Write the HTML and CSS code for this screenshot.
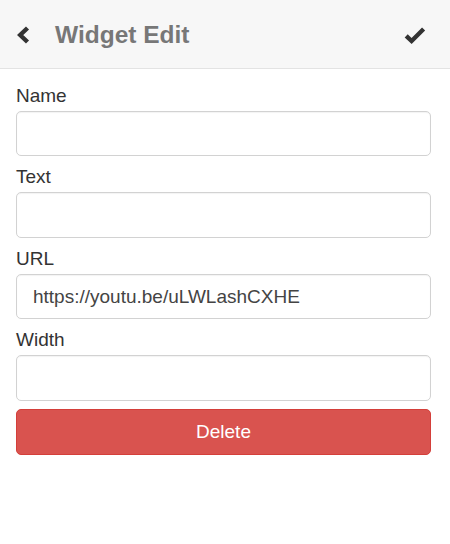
FILE: index.html
```html
<!DOCTYPE html>
<html>
<head>
<meta charset="utf-8">
<link rel="stylesheet" href="styles.css">
</head>
<body>
<header class="topbar">
  <svg class="icon-back" width="14" height="18" viewBox="0 0 14 18"><polyline points="11.5,2 4.2,9 11.5,16" fill="none" stroke="#333" stroke-width="4.4" stroke-linejoin="miter"/></svg>
  <h1 class="title">Widget Edit</h1>
  <svg class="icon-ok" width="22" height="19" viewBox="0 0 22 19"><polyline points="2.2,9.8 7.6,15 19.6,3" fill="none" stroke="#333" stroke-width="4.4" stroke-linejoin="miter"/></svg>
</header>
<main class="form">
  <div class="field">
    <label class="label">Name</label>
    <input class="input" type="text" value="">
  </div>
  <div class="field">
    <label class="label">Text</label>
    <input class="input" type="text" value="">
  </div>
  <div class="field">
    <label class="label">URL</label>
    <input class="input" type="text" value="https://youtu.be/uLWLashCXHE">
  </div>
  <div class="field">
    <label class="label">Width</label>
    <input class="input" type="text" value="">
  </div>
  <button class="btn-delete">Delete</button>
</main>
</body>
</html>
```

FILE: styles.css
```css
* { box-sizing: border-box; }
html, body {
  margin: 0;
  padding: 0;
  background: #fff;
  font-family: "Liberation Sans", Arial, sans-serif;
  color: #333;
}
.topbar {
  display: flex;
  align-items: center;
  height: 69px;
  padding: 2px 24px 0 16px;
  background: #f7f7f7;
  border-bottom: 1px solid #e3e3e3;
}
.icon-back { display: block; flex: none; }
.title {
  flex: 1;
  margin: 0 0 0 25px;
  font-size: 24.5px;
  font-weight: bold;
  color: #777;
  line-height: 1;
}
.icon-ok { display: block; flex: none; }
.form {
  padding: 5.7px 19px 0 16px;
  display: flex;
  flex-direction: column;
}
.field {
  display: flex;
  flex-direction: column;
  margin-top: 10px;
}
.label {
  font-size: 19px;
  line-height: 21.6px;
  color: #333;
  margin-bottom: 4.4px;
}
.input {
  height: 45.6px;
  width: 100%;
  border: 1px solid #d2d2d2;
  border-radius: 5px;
  padding: 0 16px;
  font-family: "Liberation Sans", Arial, sans-serif;
  font-size: 19px;
  color: #444;
  background: #fff;
  box-shadow: inset 0 1px 1px rgba(0,0,0,0.05);
  outline: none;
}
.btn-delete {
  margin-top: 7.6px;
  height: 46.5px;
  width: 100%;
  border: 1px solid #d43f3a;
  border-radius: 5px;
  background: #d9534f;
  color: #fff;
  font-family: "Liberation Sans", Arial, sans-serif;
  font-size: 19px;
  padding: 0;
}
```
